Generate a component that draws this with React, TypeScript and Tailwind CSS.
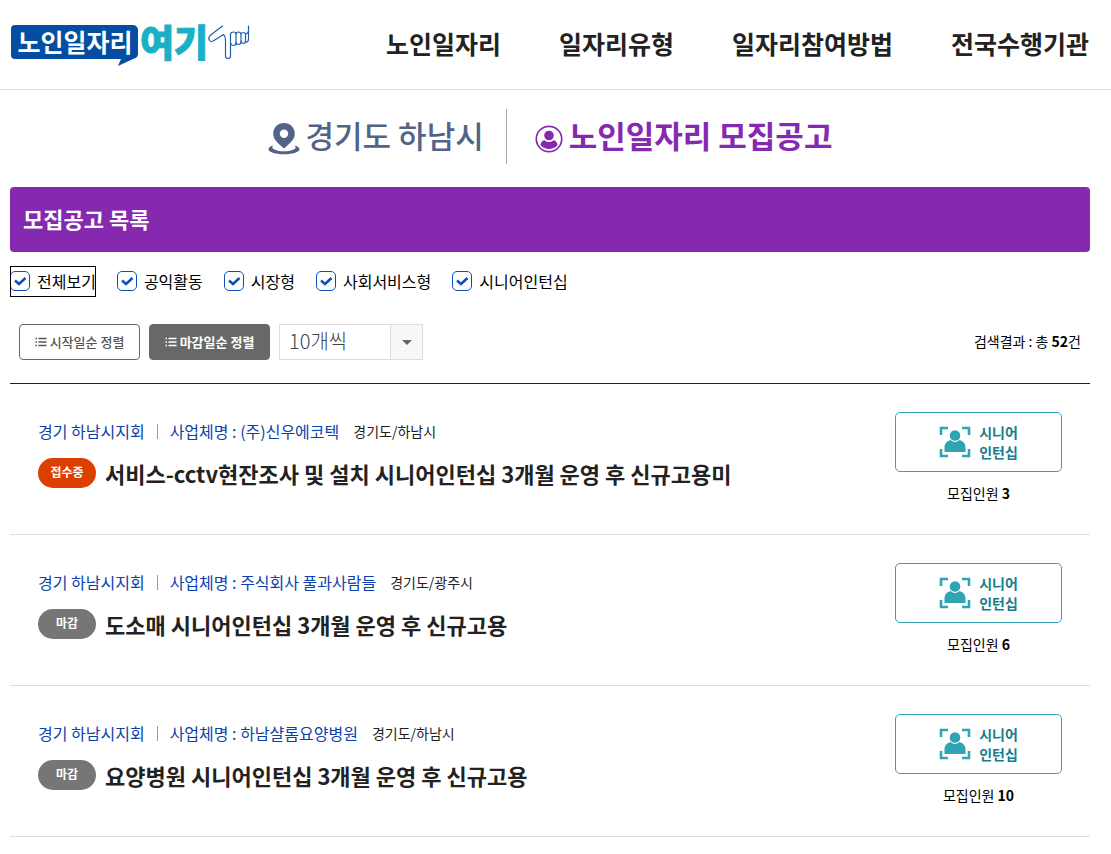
import React, { useState } from 'react';

const NAV_ITEMS = ['노인일자리', '일자리유형', '일자리참여방법', '전국수행기관'];

const FILTERS = ['전체보기', '공익활동', '시장형', '사회서비스형', '시니어인턴십'];

interface Job {
  id: number;
  branch: string;
  company: string;
  region: string;
  title: string;
  open: boolean;
  count: number;
}

const JOBS: Job[] = [
  {
    id: 1,
    branch: '경기 하남시지회',
    company: '(주)신우에코텍',
    region: '경기도/하남시',
    title: '서비스-cctv현잔조사 및 설치 시니어인턴십 3개월 운영 후 신규고용미',
    open: true,
    count: 3,
  },
  {
    id: 2,
    branch: '경기 하남시지회',
    company: '주식회사 풀과사람들',
    region: '경기도/광주시',
    title: '도소매 시니어인턴십 3개월 운영 후 신규고용',
    open: false,
    count: 6,
  },
  {
    id: 3,
    branch: '경기 하남시지회',
    company: '하남샬롬요양병원',
    region: '경기도/하남시',
    title: '요양병원 시니어인턴십 3개월 운영 후 신규고용',
    open: false,
    count: 10,
  },
];

const Logo: React.FC = () => (
  <svg width="240" height="60" viewBox="0 -7 240 60" className="overflow-visible" role="img" aria-label="노인일자리 여기">
    <path d="M5 3H123a5 5 0 0 1 5 5V32q0 4-5 5L108 44L111 37H5a4 4 0 0 1-4-4V7a4 4 0 0 1 4-4Z" fill="#034ea2" />
    <text x="65" y="30" textAnchor="middle" fontSize="25" fontWeight="700" fill="#fff">
      노인일자리
    </text>
    <text x="130" y="35" fontSize="37" fontWeight="900" fill="#19b0c7" stroke="#19b0c7" strokeWidth="1">
      여기
    </text>
    <g fill="none" stroke="#1f5fae" strokeWidth="1.2" strokeLinecap="round" strokeLinejoin="round">
      <path d="M212.500 4L200 13.500Q198 16 199.500 18.500Q201 20.500 204 18.500L213.500 12.500Q215.500 14 215.500 18V33.500Q215.500 36.500 218 36.500T220.500 33.500V12" />
      <path d="M220.500 12Q221 10 223.500 10T226 12V20.500Q226 23.500 223.500 23.500T220.500 20.500" />
      <path d="M226 12Q226.500 10 228.500 10T231 12V19.500Q231 22.500 228.500 22.500T226 20.500" />
      <path d="M231 12Q231.500 10.500 233.500 10.500T235.500 12.500V18.500Q235.500 21.500 233.500 21.500T231 19.500" />
      <path d="M235.500 20Q238.500 20.500 238.500 17V4M235.500 12Q238.500 11.500 238.500 8" />
    </g>
  </svg>
);

const PinIcon: React.FC = () => (
  <svg width="32" height="32" viewBox="0 0 32 32" fill="#536388" aria-hidden="true">
    <path
      fillRule="evenodd"
      d="M16 0C9.700 0 5.200 4.700 5.200 10.500C5.200 17 10.500 20.500 16 25.500C21.500 20.500 26.800 17 26.800 10.500C26.800 4.700 22.300 0 16 0ZM16 6.500a4.200 4.200 0 1 1 0 8.400a4.200 4.200 0 0 1 0-8.400Z"
    />
    <path d="M5 22.500C1.500 23.500.5 25 .5 26.200C.5 29 7 31.200 16 31.200S31.500 29 31.500 26.200C31.500 25 30 23.500 26.500 22.500C28 24 28 25 26.500 26C24 27.700 20 28.300 16 28.300S8 27.700 5.500 26C4 25 4 23.800 5 22.500Z" />
  </svg>
);

const PersonCircleIcon: React.FC = () => (
  <svg width="28" height="28" viewBox="0 0 28 28" fill="#8529b1" aria-hidden="true">
    <circle cx="14" cy="14" r="12.700" fill="none" stroke="#8529b1" strokeWidth="1.700" />
    <circle cx="14" cy="10.500" r="4.800" />
    <path d="M9.500 15.200Q14 19 18.500 15.200C21 15.700 22.500 17.500 22.500 20.200Q19 24 14 24T5.500 20.200C5.500 17.500 7 15.700 9.500 15.200Z" />
  </svg>
);

const ListIcon: React.FC = () => (
  <svg width="12" height="12" viewBox="0 0 12 12" stroke="currentColor" strokeWidth="1.300" aria-hidden="true">
    <path d="M0.500 2.500H2M0.500 6H2M0.500 9.500H2M3.500 2.500H11.500M3.500 6H11.500M3.500 9.500H11.500" />
  </svg>
);

const InternIcon: React.FC = () => (
  <svg width="32" height="32" viewBox="0 0 32 32" fill="#2fa5b4" aria-hidden="true">
    <path d="M2 9V2H9M23 2H30V9M30 23V30H23M9 30H2V23" fill="none" stroke="#2fa5b4" strokeWidth="2.600" />
    <circle cx="16" cy="9.500" r="5.300" />
    <path d="M5.500 26V21.500C5.500 17.500 8 14.800 11.500 14Q16 18 20.500 14C24 14.800 26.500 17.500 26.500 21.500V26Z" />
  </svg>
);

const Header: React.FC = () => (
  <header className="flex h-[90px] items-center justify-between border-b border-[#dfdfdf] pl-[10px] pr-[22px]">
    <a href="#home">
      <Logo />
    </a>
    <nav className="flex gap-[58px] pb-[2px] text-[25px] font-bold text-[#222]">
      {NAV_ITEMS.map((item) => (
        <a key={item} href="#menu" className="whitespace-nowrap">
          {item}
        </a>
      ))}
    </nav>
  </header>
);

const FilterBox: React.FC<{ label: string; focused: boolean }> = ({ label, focused }) => (
  <label
    className={`flex h-[31px] items-center gap-[7px] pb-[2px] text-[16px] ${
      focused ? 'outline outline-1 -outline-offset-1 outline-black' : ''
    }`}
  >
    <span className="grid">
      <input
        type="checkbox"
        defaultChecked
        className="peer col-start-1 row-start-1 size-5 appearance-none rounded-[5px] border border-[#0b50b8] bg-white"
      />
      <svg
        viewBox="0 0 20 20"
        className="pointer-events-none invisible col-start-1 row-start-1 size-5 peer-checked:visible"
        fill="none"
        stroke="#0b50b8"
        strokeWidth="2.500"
        aria-hidden="true"
      >
        <path d="M5 9.500L9 13L15.500 7" />
      </svg>
    </span>
    {label}
  </label>
);

const JobRow: React.FC<{ job: Job }> = ({ job }) => (
  <li className="flex justify-between border-b border-[#dcdcdc] px-7 pb-[29px] pt-7">
    <div>
      <p className="mt-[7px] flex items-center text-[16px] leading-6 text-[#0b41ad]">
        <span>{job.branch}</span>
        <span className="mx-3 h-[15px] w-px bg-[#d5799c]" />
        <span>사업체명 : {job.company}</span>
        <span className="ml-[14px] text-[14px] text-[#222]">{job.region}</span>
      </p>
      <div className="mt-[14px] flex items-center gap-[9px]">
        <span
          className={`flex h-[30px] w-[58px] items-center justify-center rounded-full pb-[2px] text-[12px] font-bold text-white ${
            job.open ? 'bg-[#dc3f00]' : 'bg-[#767676]'
          }`}
        >
          {job.open ? '접수중' : '마감'}
        </span>
        <h3 className="text-[22px] font-bold leading-8 text-[#222]">
          <a href="#detail">{job.title}</a>
        </h3>
      </div>
    </div>
    <div className="w-[167px] shrink-0 text-center">
      <div className="flex h-[60px] items-center justify-center gap-2 rounded-[5px] border border-[#2fa5b4] text-left text-[14px] font-bold leading-5 text-[#167c8c]">
        <InternIcon />
        <span>
          시니어
          <br />
          인턴십
        </span>
      </div>
      <p className="mt-[10px] text-[14px] leading-[23px]">
        모집인원 <strong className="font-bold">{job.count}</strong>
      </p>
    </div>
  </li>
);

const App: React.FC = () => {
  const [sort, setSort] = useState('end');

  const sortClass = (key: string) =>
    `flex h-9 w-[121px] items-center justify-center gap-[3px] rounded-[4px] border border-[#686868] text-[13px] ${
      sort === key ? 'bg-[#686868] font-bold text-white' : 'bg-white font-medium text-[#555]'
    }`;

  return (
    <div className="min-h-screen bg-white font-['Noto_Sans_CJK_KR',sans-serif] text-black">
      <Header />
      <main className="pl-[10px] pr-[21px]">
        <div className="flex items-center justify-center pt-[19px] text-[31px]">
          <h2 className="flex h-[55px] items-center gap-[6px] border-r border-[#aaa] pr-[22px] font-medium text-[#536388]">
            <span className="pt-1">
              <PinIcon />
            </span>
            <span className="pb-[2px]">경기도 하남시</span>
          </h2>
          <h1 className="flex h-[55px] items-center gap-[6px] pl-7 font-bold text-[#8529b1]">
            <span className="pt-1">
              <PersonCircleIcon />
            </span>
            <span className="pb-[2px]">노인일자리 모집공고</span>
          </h1>
        </div>

        <h2 className="mt-[23px] flex h-[65px] items-center rounded-[4px] bg-[#8529b1] px-[13px] pb-[2px] text-[22px] font-bold text-white">
          모집공고 목록
        </h2>

        <div className="mt-[14px] flex gap-[21px]">
          {FILTERS.map((label, i) => (
            <FilterBox key={label} label={label} focused={i === 0} />
          ))}
        </div>

        <div className="mt-[27px] flex items-center justify-between border-b border-[#222] px-[9px] pb-[23px]">
          <div className="flex gap-[9px]">
            <button type="button" onClick={() => setSort('start')} className={sortClass('start')}>
              <ListIcon />
              시작일순 정렬
            </button>
            <button type="button" onClick={() => setSort('end')} className={sortClass('end')}>
              <ListIcon />
              마감일순 정렬
            </button>
            <div className="grid">
              <select
                aria-label="페이지당 개수"
                className="col-start-1 row-start-1 h-9 w-36 appearance-none border border-[#ddd] bg-white pb-[2px] pl-[9px] text-[20px] font-light leading-none text-[#444]"
              >
                <option>10개씩</option>
                <option>20개씩</option>
                <option>30개씩</option>
              </select>
              <span className="pointer-events-none col-start-1 row-start-1 flex w-[33px] items-center justify-center justify-self-end border border-[#ddd] bg-[#f8f8f8]">
                <svg width="10" height="5" viewBox="0 0 10 5" aria-hidden="true">
                  <path d="M0 0H10L5 5Z" fill="#666" />
                </svg>
              </span>
            </div>
          </div>
          <p className="pb-[2px] text-[14px]">
            검색결과 : 총 <strong className="font-bold">52</strong>건
          </p>
        </div>

        <ul>
          {JOBS.map((job) => (
            <JobRow key={job.id} job={job} />
          ))}
        </ul>
      </main>
    </div>
  );
};

export default App;
